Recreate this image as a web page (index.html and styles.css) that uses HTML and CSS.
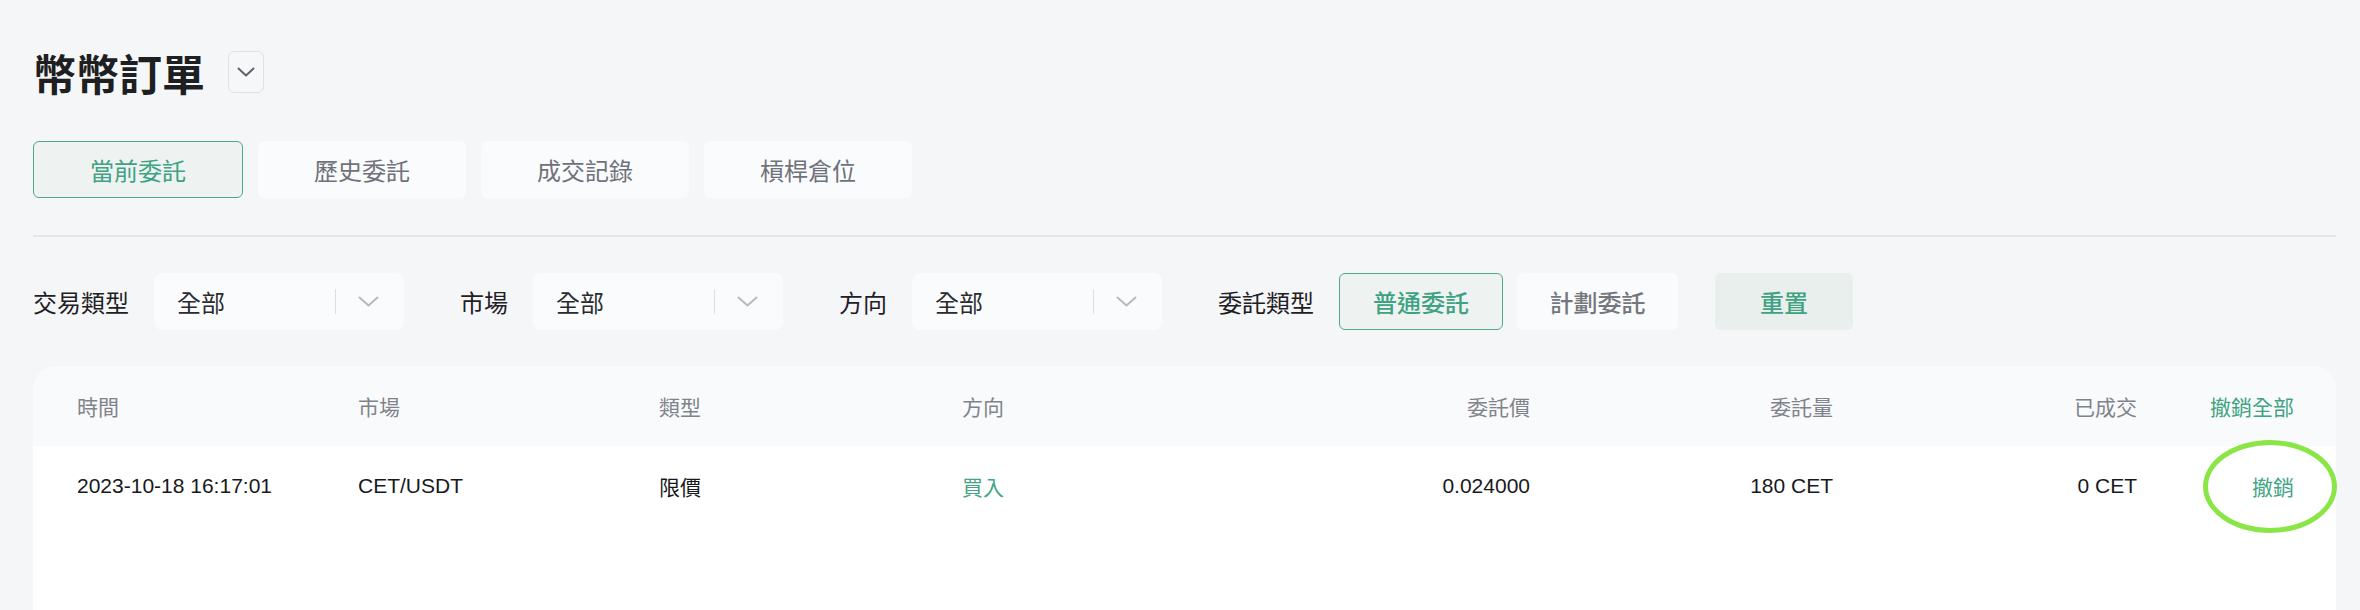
FILE: index.html
```html
<!DOCTYPE html>
<html lang="zh-Hant">
<head>
<meta charset="utf-8">
<title>幣幣訂單</title>
<link rel="stylesheet" href="styles.css">
</head>
<body>
<div class="page">
  <div class="title-row">
    <h1 class="title">幣幣訂單</h1>
    <div class="title-drop">
      <svg width="18" height="10" viewBox="0 0 18 10"><path d="M1.5 1.5 L9 8.5 L16.5 1.5" fill="none" stroke="#5f636b" stroke-width="2" stroke-linecap="round" stroke-linejoin="round"/></svg>
    </div>
  </div>

  <div class="tabs">
    <div class="tab active">當前委託</div>
    <div class="tab">歷史委託</div>
    <div class="tab">成交記錄</div>
    <div class="tab">槓桿倉位</div>
  </div>

  <div class="divider"></div>

  <div class="filters">
    <div class="group">
      <span class="f-label">交易類型</span>
      <div class="select"><span class="s-text">全部</span><span class="s-sep"></span><svg class="s-chev" width="21" height="11" viewBox="0 0 21 11"><path d="M1.5 1.5 L10.5 9.5 L19.5 1.5" fill="none" stroke="#b8babe" stroke-width="2" stroke-linecap="round" stroke-linejoin="round"/></svg></div>
    </div>
    <div class="group">
      <span class="f-label">市場</span>
      <div class="select"><span class="s-text">全部</span><span class="s-sep"></span><svg class="s-chev" width="21" height="11" viewBox="0 0 21 11"><path d="M1.5 1.5 L10.5 9.5 L19.5 1.5" fill="none" stroke="#b8babe" stroke-width="2" stroke-linecap="round" stroke-linejoin="round"/></svg></div>
    </div>
    <div class="group">
      <span class="f-label">方向</span>
      <div class="select"><span class="s-text">全部</span><span class="s-sep"></span><svg class="s-chev" width="21" height="11" viewBox="0 0 21 11"><path d="M1.5 1.5 L10.5 9.5 L19.5 1.5" fill="none" stroke="#b8babe" stroke-width="2" stroke-linecap="round" stroke-linejoin="round"/></svg></div>
    </div>
    <div class="group">
      <span class="f-label">委託類型</span>
      <div class="btn btn-active">普通委託</div>
      <div class="btn btn-plain">計劃委託</div>
      <div class="btn btn-reset">重置</div>
    </div>
  </div>

  <div class="card">
    <div class="row head">
      <div class="c">時間</div>
      <div class="c">市場</div>
      <div class="c">類型</div>
      <div class="c">方向</div>
      <div class="c r">委託價</div>
      <div class="c r">委託量</div>
      <div class="c r">已成交</div>
      <div class="c r green">撤銷全部</div>
    </div>
    <div class="row body">
      <div class="c">2023-10-18 16:17:01</div>
      <div class="c">CET/USDT</div>
      <div class="c">限價</div>
      <div class="c green">買入</div>
      <div class="c r">0.024000</div>
      <div class="c r">180 CET</div>
      <div class="c r">0 CET</div>
      <div class="c r green cancel">撤銷<span class="mark"></span></div>
    </div>
  </div>
</div>
</body>
</html>
```

FILE: styles.css
```css
html, body {
  margin: 0;
  padding: 0;
  background: #f5f6f8;
  font-family: "Noto Sans CJK TC", "Noto Sans CJK SC", sans-serif;
  overflow: hidden;
}

.page {
  padding: 51px 24px 0 33px;
}

.title-row {
  display: flex;
  align-items: center;
  height: 42px;
}

.title {
  margin: 0;
  font-size: 43px;
  line-height: 42px;
  font-weight: 700;
  color: #1e1f22;
}

.title-drop {
  margin-left: 23px;
  width: 36px;
  height: 42px;
  box-sizing: border-box;
  border: 1px solid #dfe1e4;
  border-radius: 6px;
  background: #f6f7f9;
  display: flex;
  align-items: center;
  justify-content: center;
}

.tabs {
  margin-top: 48px;
  display: flex;
  gap: 15px;
}

.tab {
  width: 208px;
  height: 57px;
  box-sizing: border-box;
  border-radius: 6px;
  background: #fafbfc;
  color: #6f727a;
  font-size: 24px;
  display: flex;
  align-items: center;
  justify-content: center;
}

.tab.active {
  width: 210px;
  background: #eef3f2;
  border: 1.5px solid #4ea98c;
  color: #3fa283;
}

.divider {
  margin-top: 37px;
  height: 1.5px;
  background: #e4e6e9;
}

.filters {
  margin-top: 36px;
  display: flex;
  align-items: center;
  height: 57px;
  gap: 56px;
}

.group {
  display: flex;
  align-items: center;
  height: 57px;
}

.f-label {
  font-size: 24px;
  color: #1f2024;
  margin-right: 25px;
}

.select {
  width: 250px;
  height: 57px;
  box-sizing: border-box;
  background: #fafbfc;
  border-radius: 8px;
  padding: 0 25px 0 23px;
  display: flex;
  align-items: center;
  font-size: 24px;
  color: #2a2b2f;
}

.s-text {
  flex: 1;
}

.s-sep {
  width: 1.5px;
  height: 25px;
  background: #dcdee1;
  margin-right: 22px;
}

.s-chev {
  display: block;
}

.btn {
  height: 57px;
  box-sizing: border-box;
  border-radius: 6px;
  font-size: 24px;
  font-weight: 500;
  display: flex;
  align-items: center;
  justify-content: center;
}

.btn-active {
  width: 164px;
  background: #eef3f2;
  border: 1.5px solid #4ea98c;
  color: #3fa283;
}

.btn-plain {
  width: 161px;
  margin-left: 14px;
  background: #fafbfc;
  color: #75777d;
}

.btn-reset {
  width: 138px;
  margin-left: 37px;
  background: #e9efed;
  color: #3fa283;
}

.card {
  margin-top: 36px;
  background: #ffffff;
  border-radius: 24px 24px 0 0;
  min-height: 300px;
  font-family: "Liberation Sans", "Noto Sans CJK TC", sans-serif;
  font-size: 21px;
}

.row {
  display: grid;
  grid-template-columns: 281px 301px 303px 265px 303px 303px 304px 157px;
  padding: 0 42px 0 44px;
  height: 80px;
  align-items: center;
}

.row.head {
  background: #f9fafb;
  border-radius: 24px 24px 0 0;
  color: #80838b;
}

.row.body {
  color: #18191c;
}

.c.r {
  text-align: right;
}

.green {
  color: #3fa283;
}

.row.body .green {
  color: #43a486;
}

.cancel {
  position: relative;
}

.mark {
  position: absolute;
  left: 66px;
  top: 50%;
  margin-top: -46px;
  width: 134px;
  height: 93px;
  box-sizing: border-box;
  border: 5px solid #8ae546;
  border-radius: 50%;
}
```
